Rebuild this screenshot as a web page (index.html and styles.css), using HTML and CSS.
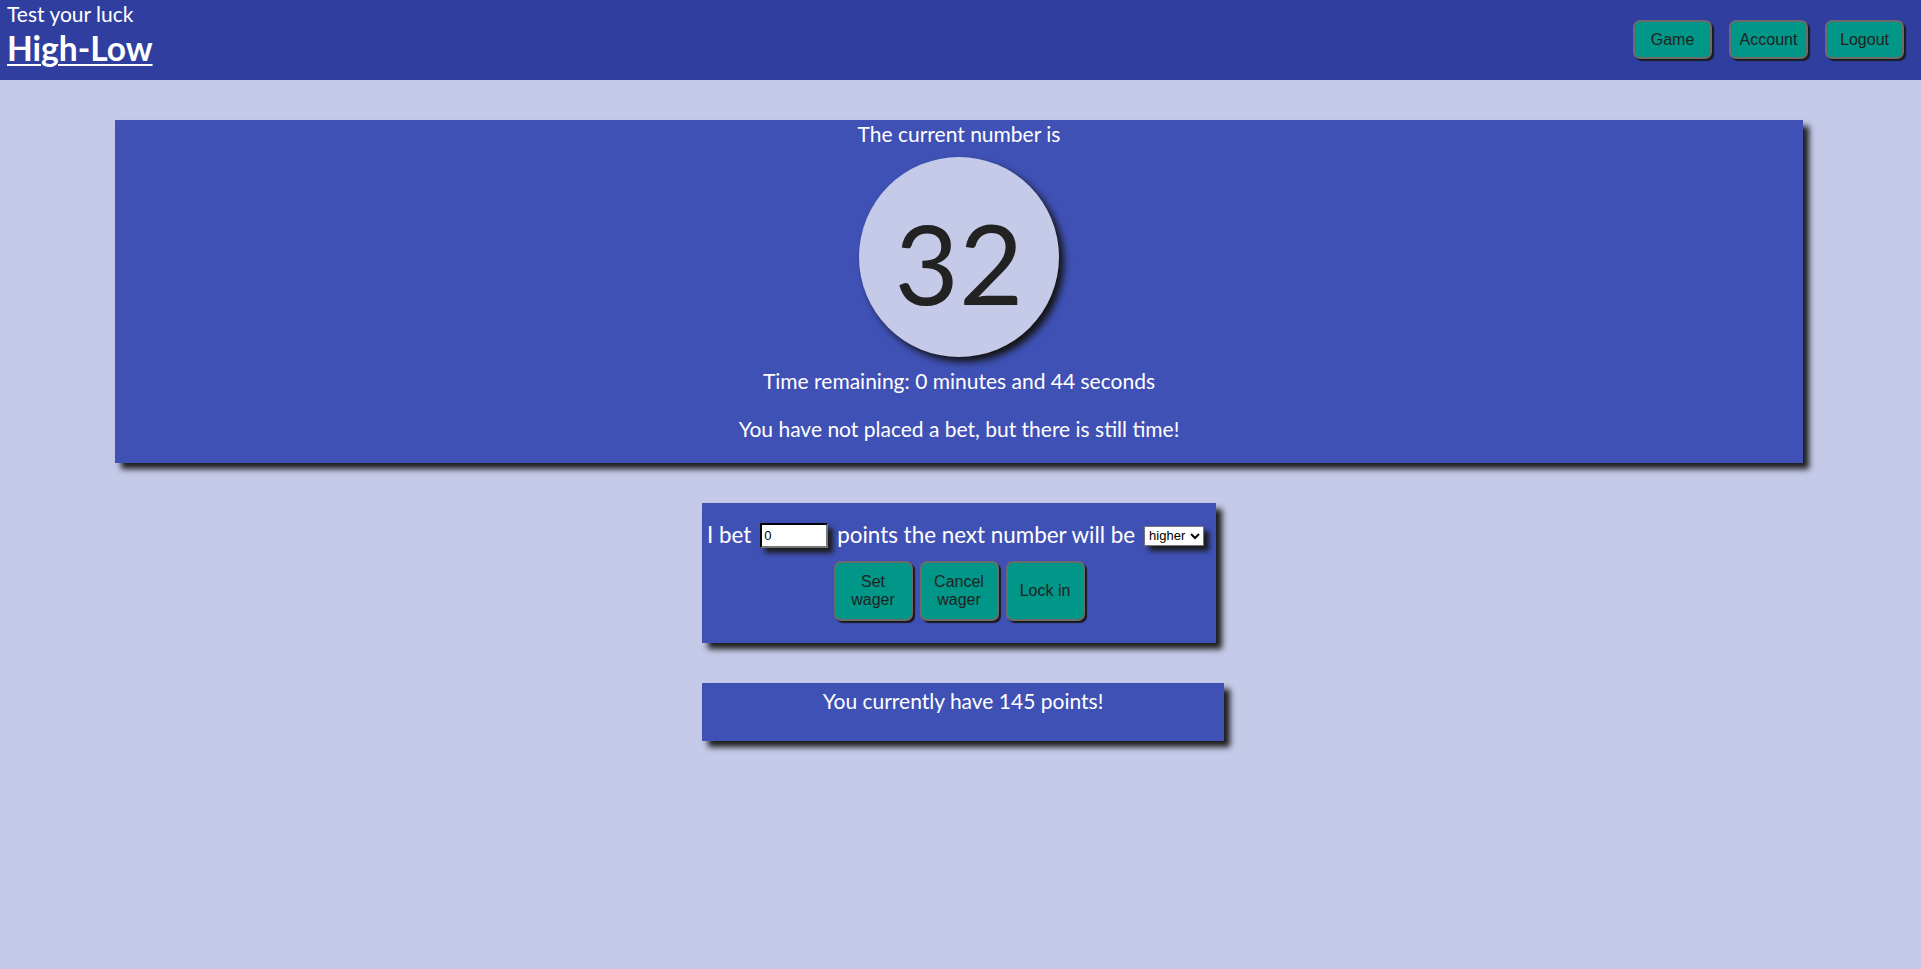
FILE: index.html
```html
<!DOCTYPE html>
<html lang="en">
<head>
<meta charset="utf-8">
<title>High-Low</title>
<link rel="stylesheet" href="styles.css">
</head>
<body>
<header class="topbar">
  <div class="brand">
    <div class="tagline">Test your luck</div>
    <h1 class="title"><a href="#">High-Low</a></h1>
  </div>
  <nav class="nav">
    <button class="btn nav-btn">Game</button>
    <button class="btn nav-btn">Account</button>
    <button class="btn nav-btn">Logout</button>
  </nav>
</header>
<main class="main">
  <section class="card board">
    <div class="line">The current number is</div>
    <div class="circle">32</div>
    <div class="line time">Time remaining: 0 minutes and 44 seconds</div>
    <div class="line status">You have not placed a bet, but there is still time!</div>
  </section>
  <div class="stack">
    <section class="card bet">
      <div class="bet-row">
        <span class="txt">I bet</span>
        <input class="wager" type="text" value="0">
        <span class="txt">points the next number will be</span>
        <select class="dir"><option>higher</option><option>lower</option></select>
      </div>
      <div class="bet-actions">
        <button class="btn act-btn">Set wager</button>
        <button class="btn act-btn">Cancel wager</button>
        <button class="btn act-btn">Lock in</button>
      </div>
    </section>
    <section class="card points">
      <div class="line">You currently have 145 points!</div>
    </section>
  </div>
</main>
</body>
</html>
```

FILE: styles.css
```css
html, body {
  margin: 0;
  padding: 0;
}
body {
  background: #C5CAE9;
  font-family: Lato, "Open Sans", sans-serif;
  color: #fff;
  min-height: 969px;
}
.topbar {
  background: #303F9F;
  height: 80px;
  display: flex;
  justify-content: space-between;
  align-items: flex-start;
  padding: 2px 17px 0 7px;
  box-sizing: border-box;
}
.brand {
  display: flex;
  flex-direction: column;
}
.tagline {
  font-size: 21px;
  line-height: 24px;
}
.title {
  margin: 2px 0 0;
  font-size: 33.5px;
  line-height: 40px;
  font-weight: 700;
}
.title a {
  color: #fff;
  text-decoration: underline;
  text-decoration-thickness: 2px;
  text-underline-offset: 3px;
}
.nav {
  display: flex;
  gap: 17px;
  margin-top: 18px;
}
.btn {
  background: #009688;
  color: #222;
  font-family: "Liberation Sans", Arial, sans-serif;
  font-size: 16px;
  line-height: 18px;
  border: 2px solid #6b6b6b;
  border-radius: 7px;
  box-shadow: 2px 2px 1px #1a1a1a;
  box-sizing: border-box;
  cursor: pointer;
}
.nav-btn {
  width: 79px;
  height: 39px;
  padding: 0;
}
.main {
  padding: 40px 3px 0 0;
  display: flex;
  flex-direction: column;
  align-items: center;
  gap: 40px;
}
.card {
  background: #3F51B5;
  box-shadow: 6px 6px 6px #1c1c1c;
  box-sizing: border-box;
}
.board {
  width: 1688px;
  display: flex;
  flex-direction: column;
  align-items: center;
  padding-bottom: 20px;
}
.line {
  font-size: 21px;
  line-height: 28px;
  text-align: center;
}
.circle {
  width: 200px;
  height: 200px;
  border-radius: 50%;
  background: #C5CAE9;
  color: #222;
  font-size: 111px;
  line-height: 210px;
  text-align: center;
  margin-top: 9px;
  box-shadow: 5px 5px 7px #151515;
}
.time {
  margin-top: 10px;
}
.status {
  margin-top: 20px;
}
.stack {
  width: 514px;
  display: flex;
  flex-direction: column;
  align-items: flex-start;
  gap: 40px;
}
.bet {
  width: 514px;
  padding: 20px 0 22px;
  display: flex;
  flex-direction: column;
  align-items: center;
  gap: 13px;
}
.bet-row {
  align-self: stretch;
  display: flex;
  align-items: center;
  justify-content: center;
  gap: 9px;
  height: 25px;
  padding-right: 7px;
}
.txt {
  font-size: 22.4px;
  line-height: 25px;
  padding-bottom: 3px;
  white-space: nowrap;
}
.wager {
  width: 68px;
  height: 25px;
  box-sizing: border-box;
  border: 2px inset #777;
  border-top-color: #222;
  border-left-color: #222;
  background: #fff;
  font-family: "Liberation Sans", Arial, sans-serif;
  font-size: 13px;
  padding: 0 2px;
  color: #000;
  box-shadow: 5px 5px 5px #1c1c1c;
  outline: none;
}
.dir {
  width: 60px;
  height: 20px;
  box-sizing: border-box;
  font-family: "Liberation Sans", Arial, sans-serif;
  font-size: 13px;
  border: 1px solid #767676;
  background: #fff;
  color: #000;
  padding: 0;
  box-shadow: 5px 5px 5px #1c1c1c;
}
.bet-actions {
  display: flex;
  gap: 7px;
}
.act-btn {
  width: 79px;
  height: 60px;
  padding: 0 9px;
}
.points {
  width: 522px;
  padding: 4px 0 26px;
}
```
